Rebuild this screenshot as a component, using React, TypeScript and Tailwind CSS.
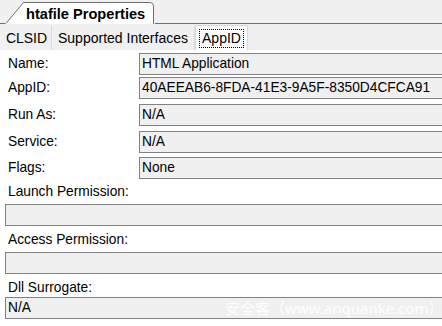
import React from "react";

const font = { fontFamily: '"Liberation Sans", Arial, sans-serif' };

function Field({ value, className = "" }: { value: string; className?: string }) {
  return (
    <div
      className={`h-[22px] flex-1 border-y border-l border-[#828282] bg-[#f0f0f0] pl-[2px] leading-[20px] text-black whitespace-nowrap overflow-hidden ${className}`}
    >
      {value}
    </div>
  );
}

function Row({ label, value, mt }: { label: string; value: string; mt: string }) {
  return (
    <div className={`flex items-center ${mt}`}>
      <div className="w-[139px] pl-[8px] leading-[22px] text-black">{label}</div>
      <Field value={value} />
    </div>
  );
}

export default function App() {
  return (
    <div className="w-[442px] h-[326px] overflow-hidden bg-white text-[13.75px] relative" style={font}>
      {/* Title tab strip */}
      <div className="flex items-end h-[24px] bg-[#f0f0f0]">
        <div className="w-[5px] h-full border-b border-[#6f6f6f]" />
        <div className="relative w-[150px] h-[23px]">
          <svg className="absolute inset-0" width="150" height="23" viewBox="0 0 150 23">
            <path d="M0.5 23 L18.5 1.5 L145 1.5 Q148.5 1.5 148.5 5 L148.5 23 Z" fill="#ffffff" stroke="#6f6f6f" strokeWidth="1" />
            <rect x="1" y="22" width="147" height="1" fill="#ffffff" />
          </svg>
          <div className="relative pl-[21px] pt-[2px] leading-[22px] text-[14.6px] font-bold text-black">htafile Properties</div>
        </div>
        <div className="flex-1 h-full border-b border-[#6f6f6f]" />
      </div>

      {/* Sub-tab strip */}
      <div className="flex items-end h-[26px] bg-[#f0f0f0] text-[14px] text-black">
        <div className="w-[52px] h-[24px] border-r border-[#d9d9d9] flex items-center justify-center pl-[2px] leading-[22px]">CLSID</div>
        <div className="w-[143px] h-[24px] border-r border-[#d9d9d9] flex items-center justify-center leading-[22px]">Supported Interfaces</div>
        <div className="w-[53px] h-[25px] bg-white border-x border-t border-[#d9d9d9] flex items-center justify-center">
          <span className="border border-dotted border-black px-[2px] leading-[17px]">AppID</span>
        </div>
        <div className="flex-1" />
      </div>

      {/* Content */}
      <div className="pt-[3px]">
        <Row label="Name:" value="HTML Application" mt="" />
        <Row label="AppID:" value="40AEEAB6-8FDA-41E3-9A5F-8350D4CFCA91" mt="mt-[2px]" />
        <Row label="Run As:" value="N/A" mt="mt-[5px]" />
        <Row label="Service:" value="N/A" mt="mt-[5px]" />
        <Row label="Flags:" value="None" mt="mt-[4px]" />

        <div className="mt-[4px] mb-[3px] pl-[8px] leading-[18px] text-black">Launch Permission:</div>
        <div className="flex pl-[5px]">
          <Field value="" />
        </div>

        <div className="mt-[5px] mb-[3px] pl-[8px] leading-[18px] text-black">Access Permission:</div>
        <div className="flex pl-[5px]">
          <Field value="" />
        </div>

        <div className="mt-[5px] pl-[8px] leading-[18px] text-black">Dll Surrogate:</div>
        <div className="flex pl-[5px]">
          <Field value="N/A" />
        </div>
      </div>

      {/* Watermark */}
      <div
        className="absolute left-[225px] top-[297px] leading-[22px] text-[15px] text-white/90 whitespace-nowrap pointer-events-none"
        style={{ fontFamily: '"Noto Sans", "Noto Sans CJK SC", sans-serif' }}
      >
        安全客（www.anquanke.com）
      </div>
    </div>
  );
}
